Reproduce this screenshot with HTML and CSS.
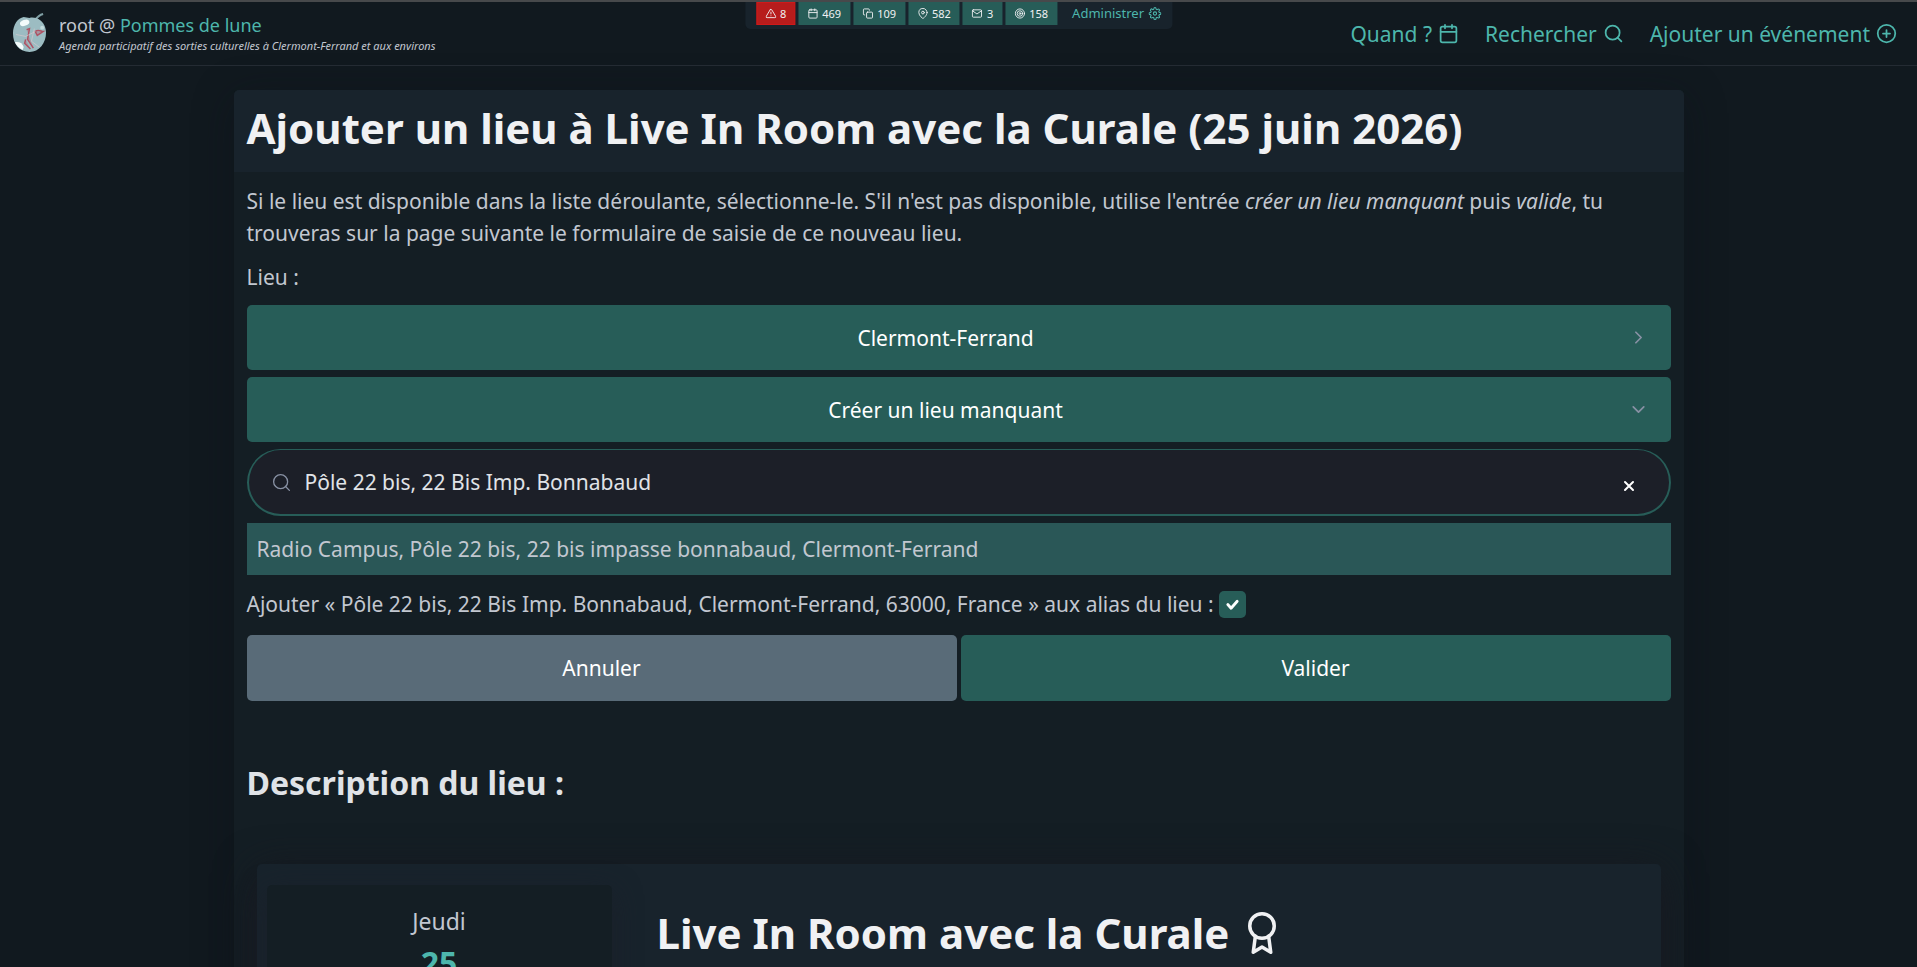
FILE: index.html
```html
<!DOCTYPE html>
<html lang="fr">
<head>
<meta charset="utf-8">
<title>Ajouter un lieu - Pommes de lune</title>
<link rel="stylesheet" href="styles.css">
</head>
<body>
<svg class="sprite" aria-hidden="true">
  <symbol id="calendar" viewBox="0 0 24 24"><rect x="3" y="4" width="18" height="18" rx="2"/><path d="M16 2v4M8 2v4M3 10h18"/></symbol>
  <symbol id="search" viewBox="0 0 24 24"><circle cx="11" cy="11" r="8"/><path d="m21 21-4.35-4.35"/></symbol>
  <symbol id="plus" viewBox="0 0 24 24"><circle cx="12" cy="12" r="10"/><path d="M12 8v8M8 12h8"/></symbol>
  <symbol id="alert" viewBox="0 0 24 24"><path d="M10.29 3.86 1.82 18a2 2 0 0 0 1.71 3h16.94a2 2 0 0 0 1.71-3L13.71 3.86a2 2 0 0 0-3.42 0zM12 9v4M12 17h.01"/></symbol>
  <symbol id="copy" viewBox="0 0 24 24"><rect x="9" y="9" width="13" height="13" rx="2"/><path d="M5 15H4a2 2 0 0 1-2-2V4a2 2 0 0 1 2-2h9a2 2 0 0 1 2 2v1"/></symbol>
  <symbol id="pin" viewBox="0 0 24 24"><path d="M21 10c0 7-9 13-9 13s-9-6-9-13a9 9 0 0 1 18 0z"/><circle cx="12" cy="10" r="3"/></symbol>
  <symbol id="mail" viewBox="0 0 24 24"><rect x="2" y="4" width="20" height="16" rx="2"/><path d="m22 6-10 7L2 6"/></symbol>
  <symbol id="target" viewBox="0 0 24 24"><circle cx="12" cy="12" r="10"/><circle cx="12" cy="12" r="6"/><circle cx="12" cy="12" r="2"/></symbol>
  <symbol id="gear" viewBox="0 0 24 24"><circle cx="12" cy="12" r="3"/><path d="M19.4 15a1.65 1.65 0 0 0 .33 1.82l.06.06a2 2 0 1 1-2.83 2.83l-.06-.06a1.65 1.65 0 0 0-2.8 1.17V21a2 2 0 0 1-4 0v-.09a1.65 1.65 0 0 0-2.9-1.26l-.06.06a2 2 0 1 1-2.83-2.83l.06-.06A1.65 1.65 0 0 0 3.09 14H3a2 2 0 0 1 0-4h.09a1.65 1.65 0 0 0 1.26-2.9l-.06-.06a2 2 0 1 1 2.83-2.83l.06.06A1.65 1.65 0 0 0 10 3.09V3a2 2 0 0 1 4 0v.09a1.65 1.65 0 0 0 2.82 1.18l.06-.06a2 2 0 1 1 2.83 2.83l-.06.06A1.65 1.65 0 0 0 20.91 10H21a2 2 0 0 1 0 4h-.09a1.65 1.65 0 0 0-1.51 1z"/></symbol>
  <symbol id="chevron" viewBox="0 0 24 24"><path d="m6 9 6 6 6-6"/></symbol>
  <symbol id="cross" viewBox="0 0 12 12"><path d="m2 2 8 8M10 2l-8 8"/></symbol>
  <symbol id="check" viewBox="0 0 16 16"><path d="m3 8 3.500 4L13 4.500"/></symbol>
  <symbol id="award" viewBox="0 0 24 24"><circle cx="12" cy="8" r="7"/><path d="M8.210 13.890 7 23l5-3 5 3-1.210-9.120"/></symbol>
</svg>

<header class="site-header">
  <div class="brand">
    <svg class="logo" viewBox="0 0 36 40" aria-hidden="true">
      <path class="logo-stem" d="M24 6c2-3 4-5 8-6"/>
      <path class="logo-body" d="M18 4c3-1 5 0 7 0 6 2 10 8 10 15 0 11-7 20-17 20S1 31 1 20C1 11 6 4 12 3c2 0 4 1 6 1z"/>
      <ellipse class="logo-shine" cx="13" cy="9" rx="5" ry="3" transform="rotate(-20 13 9)"/>
      <path class="logo-shine" d="M3 29c4-1 8 1 9 5l-1 3c-4-2-6-4-8-8z"/>
      <circle class="logo-spot" cx="31" cy="14" r="2"/>
      <path class="logo-red" d="m15 16 3-1-2 11 6 9M14 26l-1 4 6 6M24 18c3-3 6 0 8 0l-6 4z"/>
      <path class="logo-line" d="m23 15-3 13 8 6M4 21l10 2 10-5"/>
    </svg>
    <div>
      <div class="brand-name">root @ <a href="#">Pommes de lune</a></div>
      <div class="tagline">Agenda participatif des sorties culturelles à Clermont-Ferrand et aux environs</div>
    </div>
  </div>
  <nav class="main-nav" aria-label="Principal">
    <a href="#">Quand ? <svg class="icon"><use href="#calendar"/></svg></a>
    <a href="#">Rechercher <svg class="icon"><use href="#search"/></svg></a>
    <a href="#">Ajouter un événement <svg class="icon"><use href="#plus"/></svg></a>
  </nav>
  <nav class="admin-bar" aria-label="Administration">
    <a class="badge alert" href="#"><svg class="icon"><use href="#alert"/></svg>8</a>
    <a class="badge" href="#"><svg class="icon"><use href="#calendar"/></svg>469</a>
    <a class="badge" href="#"><svg class="icon"><use href="#copy"/></svg>109</a>
    <a class="badge" href="#"><svg class="icon"><use href="#pin"/></svg>582</a>
    <a class="badge" href="#"><svg class="icon"><use href="#mail"/></svg>3</a>
    <a class="badge" href="#"><svg class="icon"><use href="#target"/></svg>158</a>
    <a class="admin-link" href="#">Administrer <svg class="icon"><use href="#gear"/></svg></a>
  </nav>
</header>

<main class="panel">
  <header class="panel-header">
    <h1>Ajouter un lieu à Live In Room avec la Curale (25 juin 2026)</h1>
  </header>
  <form class="panel-body">
    <p>Si le lieu est disponible dans la liste déroulante, sélectionne-le. S'il n'est pas disponible, utilise l'entrée <em>créer un lieu manquant</em> puis <em>valide</em>, tu trouveras sur la page suivante le formulaire de saisie de ce nouveau lieu.</p>
    <p class="field-name">Lieu :</p>
    <div class="choices">
      <details>
        <summary class="btn">Clermont-Ferrand<svg class="icon chevron"><use href="#chevron"/></svg></summary>
      </details>
      <details open>
        <summary class="btn">Créer un lieu manquant<svg class="icon chevron"><use href="#chevron"/></svg></summary>
      </details>
      <div class="search-box">
        <svg class="icon"><use href="#search"/></svg>
        <input type="search" aria-label="Rechercher un lieu" value="Pôle 22 bis, 22 Bis Imp. Bonnabaud">
        <button type="button" class="clear" aria-label="Effacer"><svg class="icon"><use href="#cross"/></svg></button>
      </div>
      <button type="button" class="option">Radio Campus, Pôle 22 bis, 22 bis impasse bonnabaud, Clermont-Ferrand</button>
    </div>
    <div class="alias">
      <label for="alias">Ajouter « Pôle 22 bis, 22 Bis Imp. Bonnabaud, Clermont-Ferrand, 63000, France » aux alias du lieu :</label>
      <span class="tick"><input type="checkbox" id="alias" checked><svg class="icon"><use href="#check"/></svg></span>
    </div>
    <div class="actions">
      <button type="button" class="btn secondary">Annuler</button>
      <button type="submit" class="btn">Valider</button>
    </div>
    <h2>Description du lieu :</h2>
    <article class="event">
      <div class="date">
        <div class="weekday">Jeudi</div>
        <div class="day">25</div>
      </div>
      <h3>Live In Room avec la Curale <svg class="icon"><use href="#award"/></svg></h3>
    </article>
  </form>
</main>
</body>
</html>
```
FILE: styles.css
```css
* { box-sizing: border-box; }

html {
  height: 100%;
  overflow: hidden;
  background: #11191f;
}

body {
  margin: 0;
  border-top: 2px solid #47494b;
  color: #c2c7d0;
  font: 21px/32px "Noto Sans", sans-serif;
}

a { color: #4db6ac; text-decoration: none; }
h1, h2, h3, p { margin: 0; }
button, input { font: inherit; }

.sprite { position: absolute; width: 0; height: 0; }

.icon {
  width: 1em;
  height: 1em;
  fill: none;
  stroke: currentColor;
  stroke-width: 2;
  stroke-linecap: round;
  stroke-linejoin: round;
  overflow: visible;
}

/* Site header */
.site-header {
  position: relative;
  display: flex;
  justify-content: space-between;
  align-items: center;
  height: 64px;
  padding: 0 20px 0 12px;
  border-bottom: 1px solid #242b33;
}

.brand { display: flex; align-items: center; gap: 12px; }
.logo { width: 35px; height: 39px; overflow: visible; }
.logo-body { fill: #9cbcc2; }
.logo-shine { fill: #f4fbfb; }
.logo-spot { fill: #c3dcde; }
.logo-stem { fill: none; stroke: #7f9ea3; stroke-width: 2; }
.logo-red { fill: #b9516455; stroke: #ae5364; stroke-width: 1.500; }
.logo-line { fill: none; stroke: #d7c8cd; stroke-width: 0.700; }
.brand-name { font-size: 18px; line-height: 24px; }
.tagline { font-size: 11px; line-height: 18px; font-style: italic; }

.main-nav { display: flex; gap: 26px; }
.main-nav a { display: flex; align-items: center; gap: 6px; }

.admin-bar {
  position: absolute;
  top: 0;
  left: 50%;
  transform: translateX(-50%);
  display: flex;
  gap: 3px;
  padding: 0 11px 4px;
  border-radius: 0 0 5px 5px;
  background: #18232c;
  font-size: 11px;
  line-height: 23px;
}
.admin-bar a { display: flex; align-items: center; gap: 4px; }
.badge { padding: 0 9px; background: #275d58; color: #f0f1f3; }
.badge.alert { background: #b71c1c; box-shadow: inset 0 0 0 1px #d01919; }
.admin-bar .admin-link { padding-left: 12px; font-size: 13px; }

/* Main panel */
.panel {
  max-width: 1450px;
  margin: 24px auto 0;
  border-radius: 5px;
  background: #141e24;
  box-shadow: 0 8px 40px #0c121966;
}
.panel-header {
  padding: 14px 13px 20px;
  border-radius: 5px 5px 0 0;
  background: #18232c;
}
h1, h3 { color: #f0f1f3; font-size: 42px; line-height: 48px; }
.panel-body { padding: 13px; }
.field-name { margin: 12px 0 12px; }

.btn {
  display: flex;
  align-items: center;
  justify-content: center;
  width: 100%;
  height: 66px;
  padding: 0 20px;
  border: 0;
  border-radius: 5px;
  background: #275d58;
  color: #fff;
  list-style: none;
  cursor: pointer;
}
.secondary { background: #596b78; }

.choices { display: grid; gap: 7px; }
summary.btn { position: relative; height: 65px; padding-right: 46px; }
.chevron {
  position: absolute;
  right: 22px;
  color: #8891a4;
  transform: rotate(-90deg);
}
details[open] .chevron { transform: none; }

.search-box {
  display: flex;
  align-items: center;
  gap: 13px;
  padding: 16px 32px 16px 22px;
  border: 2px solid #275d58;
  border-top-width: 1px;
  border-radius: 34px;
  background: #1c1f28;
  color: #8891a4;
}
.search-box > .icon { stroke-width: 1.500; }
.search-box input {
  flex: 1;
  min-width: 0;
  height: 32px;
  padding: 0;
  border: 0;
  outline: 0;
  background: none;
  color: #e0e3e7;
  appearance: none;
}
.search-box input::-webkit-search-cancel-button { display: none; }
.clear {
  display: flex;
  padding: 8px 2px 0 0;
  border: 0;
  background: none;
  color: #fff;
  font-size: 12px;
}

.option {
  padding: 10px;
  border: 0;
  background: #2a5757;
  color: #c2c7d0;
  line-height: 32px;
  text-align: left;
}

.alias { display: flex; align-items: center; gap: 5px; margin: 13px 0 15px; }
.tick { position: relative; display: flex; }
.tick input {
  width: 27px;
  height: 27px;
  margin: 0;
  border-radius: 5px;
  background: #275d58;
  appearance: none;
}
.tick .icon {
  position: absolute;
  top: 6px;
  left: 6px;
  width: 15px;
  height: 15px;
  color: #fff;
  stroke-width: 3;
  pointer-events: none;
}

.actions { display: grid; grid-template-columns: 1fr 1fr; gap: 4px; }

h2 { margin: 60px 0 59px; color: #e0e3e7; font-size: 32px; line-height: 44px; }

.event {
  display: grid;
  grid-template-columns: 345px 1fr;
  gap: 45px;
  margin: 0 10px;
  padding: 21px 10px;
  border-radius: 5px;
  background: #18232c;
  box-shadow: 0 8px 40px #181820;
}
.date {
  padding: 20px;
  border-radius: 5px;
  background: #141e24;
  box-shadow: 0 8px 28px #1b202a;
  text-align: center;
}
.weekday { font-size: 23px; }
.day { color: #4db6ac; font-size: 32px; line-height: 52px; font-weight: 700; }
h3 { display: flex; align-items: center; gap: 12px; align-self: start; padding-top: 24px; }
```
